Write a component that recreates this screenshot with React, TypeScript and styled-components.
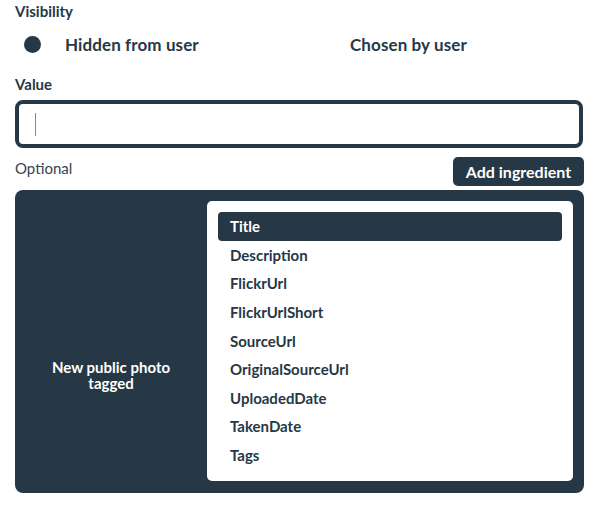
import styled, { createGlobalStyle } from 'styled-components';

const ink = '#263846';

const GlobalStyle = createGlobalStyle`
  body {
    margin: 0;
    background: #ffffff;
    font-family: Lato, 'Open Sans', sans-serif;
    color: ${ink};
  }
`;

const Page = styled.div`
  width: 569px;
  padding: 2px 15px 0;
`;

const Label = styled.div`
  font-size: 15px;
  font-weight: 700;
  line-height: 18px;
  margin-bottom: 10px;
`;

const RadioGroup = styled.div`
  display: grid;
  grid-template-columns: 285px 284px;
  height: 28px;
  margin-bottom: 17px;
`;

const RadioOption = styled.label`
  display: flex;
  align-items: center;
  font-size: 17px;
  font-weight: 700;
  letter-spacing: 0.1px;
`;

const Dot = styled.span<{ checked: boolean }>`
  width: 17px;
  height: 17px;
  border-radius: 50%;
  margin: 0 24px 0 9px;
  background: ${props => (props.checked ? ink : 'transparent')};
`;

const ValueLabel = styled(Label)`
  margin-bottom: 7px;
`;

const Input = styled.div`
  height: 40px;
  margin-right: 1px;
  border: 4px solid ${ink};
  border-radius: 8px;
  display: flex;
  align-items: center;
  padding-left: 16px;
`;

const Caret = styled.span`
  width: 1px;
  height: 23px;
  background: #7b8792;
`;

const HelpRow = styled.div`
  display: flex;
  justify-content: space-between;
  align-items: flex-start;
  margin-top: 9px;
`;

const Hint = styled.span`
  font-size: 15px;
  font-weight: 400;
  margin-top: 2px;
  color: #38434d;
`;

const AddButton = styled.button`
  width: 131px;
  height: 29px;
  border: none;
  border-radius: 5px;
  background: ${ink};
  color: #ffffff;
  font-family: inherit;
  font-size: 16px;
  font-weight: 700;
  padding: 0;
`;

const Picker = styled.div`
  display: grid;
  grid-template-columns: 192px 1fr;
  height: 303px;
  margin-top: 4px;
  border-radius: 8px;
  background: ${ink};
  padding: 11px 11px 12px 0;
  box-sizing: border-box;
`;

const Trigger = styled.div`
  display: flex;
  align-items: center;
  justify-content: center;
  text-align: center;
  color: #ffffff;
  font-size: 15px;
  font-weight: 700;
  line-height: 16px;
  padding: 68px 30px 0;
`;

const List = styled.ul`
  list-style: none;
  margin: 0;
  padding: 11px 11px;
  background: #ffffff;
  border-radius: 5px;
`;

const Item = styled.li<{ selected?: boolean }>`
  height: 28.6px;
  display: flex;
  align-items: center;
  padding-left: 12px;
  border-radius: 4px;
  font-size: 15px;
  font-weight: 700;
  background: ${props => (props.selected ? ink : 'transparent')};
  color: ${props => (props.selected ? '#ffffff' : ink)};
`;

const ingredients = [
  'Title',
  'Description',
  'FlickrUrl',
  'FlickrUrlShort',
  'SourceUrl',
  'OriginalSourceUrl',
  'UploadedDate',
  'TakenDate',
  'Tags',
];

const App = () => (
  <>
    <GlobalStyle />
    <Page>
      <Label>Visibility</Label>
      <RadioGroup>
        <RadioOption>
          <Dot checked />
          Hidden from user
        </RadioOption>
        <RadioOption>
          <Dot checked={false} />
          Chosen by user
        </RadioOption>
      </RadioGroup>
      <ValueLabel>Value</ValueLabel>
      <Input>
        <Caret />
      </Input>
      <HelpRow>
        <Hint>Optional</Hint>
        <AddButton>Add ingredient</AddButton>
      </HelpRow>
      <Picker>
        <Trigger>New public photo tagged</Trigger>
        <List>
          {ingredients.map((name, i) => (
            <Item key={name} selected={i === 0}>
              {name}
            </Item>
          ))}
        </List>
      </Picker>
    </Page>
  </>
);

export default App;
